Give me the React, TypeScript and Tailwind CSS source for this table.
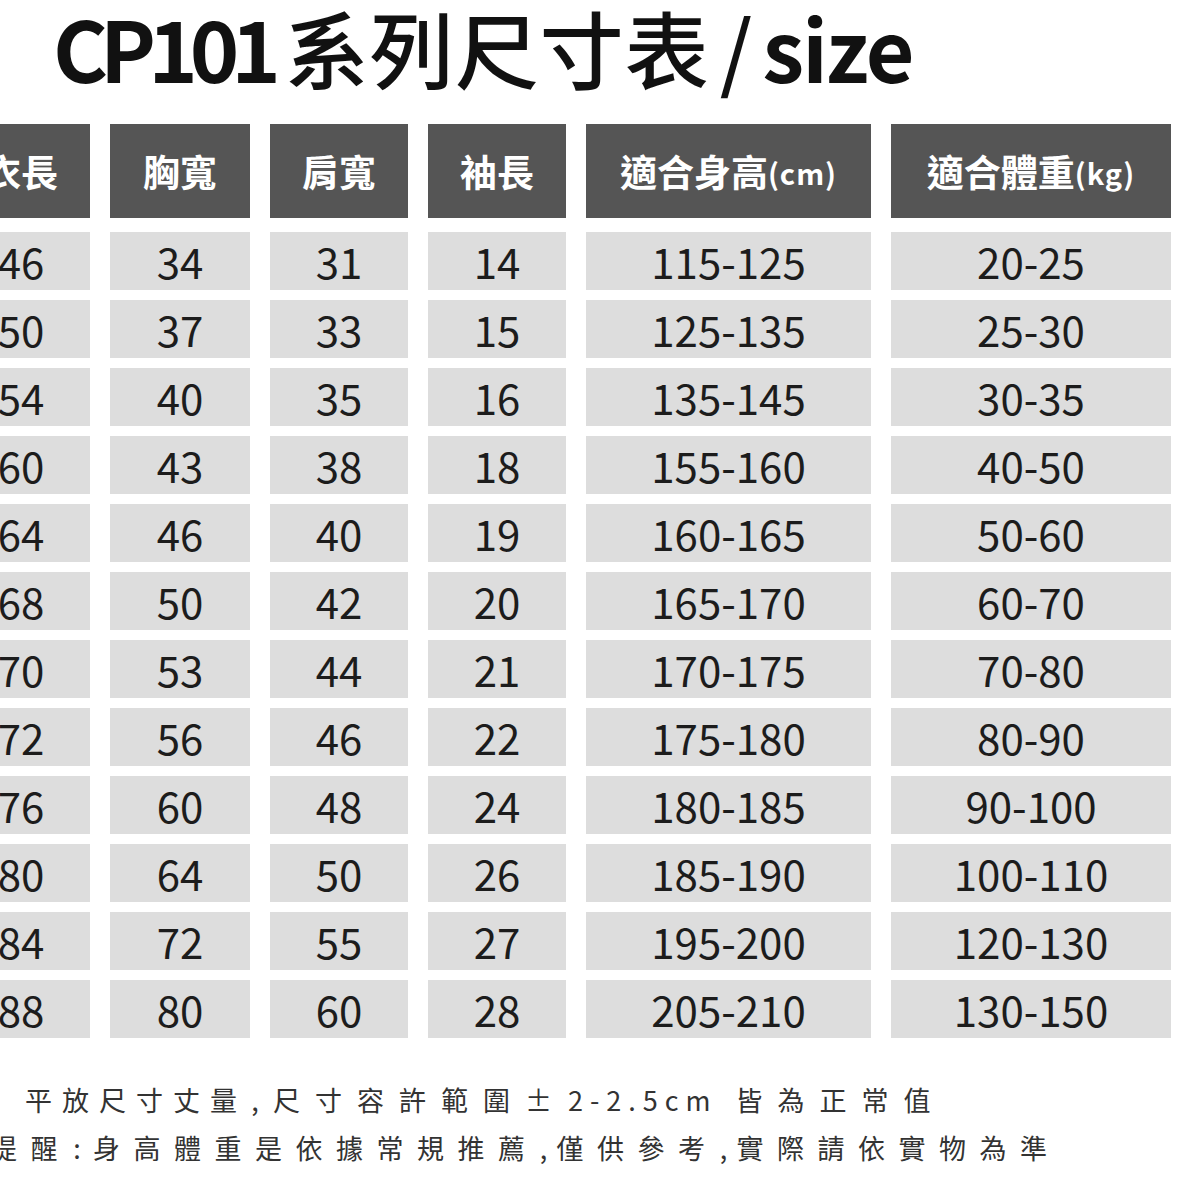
import React from "react"

const font = { fontFamily: '"Noto Sans CJK TC", "Noto Sans", sans-serif' }

const headers: { label: string; unit?: string }[] = [
  { label: "衣長" },
  { label: "胸寬" },
  { label: "肩寬" },
  { label: "袖長" },
  { label: "適合身高", unit: "(cm)" },
  { label: "適合體重", unit: "(kg)" },
]

const rows: string[][] = [
  ["46", "34", "31", "14", "115-125", "20-25"],
  ["50", "37", "33", "15", "125-135", "25-30"],
  ["54", "40", "35", "16", "135-145", "30-35"],
  ["60", "43", "38", "18", "155-160", "40-50"],
  ["64", "46", "40", "19", "160-165", "50-60"],
  ["68", "50", "42", "20", "165-170", "60-70"],
  ["70", "53", "44", "21", "170-175", "70-80"],
  ["72", "56", "46", "22", "175-180", "80-90"],
  ["76", "60", "48", "24", "180-185", "90-100"],
  ["80", "64", "50", "26", "185-190", "100-110"],
  ["84", "72", "55", "27", "195-200", "120-130"],
  ["88", "80", "60", "28", "205-210", "130-150"],
]

// first column runs off the left edge, like the cropped chart
const cols = "grid grid-cols-[138px_140px_138px_138px_285px_280px] gap-x-[20px] ml-[-48px]"

// narrow centred slot for punctuation
function P({ c, w }: { c: string; w: string }) {
  return <span className={`inline-block text-center tracking-normal ${w}`}>{c}</span>
}

export default function App() {
  return (
    <div className="w-[1200px] h-[1200px] bg-white overflow-hidden" style={font}>
      <h1 className="pt-[5px] pl-[53px] text-[84px] leading-none text-[#111] whitespace-nowrap">
        <span className="font-bold tracking-[-8px]">CP101</span>
        <span className="font-medium tracking-[1px] ml-[12px]">系列尺寸表</span>
        <span className="font-medium ml-[10px] mr-[10px]">/</span>
        <span className="font-bold tracking-[-2px]">size</span>
      </h1>

      <div className={`${cols} mt-[35px]`}>
        {headers.map((h) => (
          <div
            key={h.label}
            className="h-[94px] bg-[#555555] flex items-center justify-center text-white font-bold"
          >
            <span className="text-[37px] leading-none">{h.label}</span>
            {h.unit && <span className="text-[29px] leading-none tracking-[1px] mt-[3px]">{h.unit}</span>}
          </div>
        ))}
      </div>

      <div className={`${cols} gap-y-[10px] mt-[14px]`}>
        {rows.flatMap((r, i) =>
          r.map((v, j) => (
            <div
              key={`${i}-${j}`}
              className="h-[58px] bg-[#dddddd] flex items-center justify-center text-[42px] leading-none text-[#1c1c1c]"
            >
              {v}
            </div>
          ))
        )}
      </div>

      <div className="mt-[38px] text-[27px] leading-[48px] text-[#333] whitespace-nowrap">
        <p className="pl-[25px]">
          <span className="tracking-[10px]">平放尺寸丈量</span>
          <P c="," w="w-[16px] mr-[10px]" />
          <span className="tracking-[15px]">尺寸容許範圍</span>
          <span className="tracking-[12px]">±</span>
          <span className="tracking-[7px] ml-[4px] mr-[18px]">2-2.5cm</span>
          <span className="tracking-[15px]">皆為正常值</span>
        </p>
        <p className="ml-[-10px] tracking-[13.5px]">
          提醒<P c=":" w="w-[12px] mr-[10px]" />身高體重是依據常規推薦<P c="," w="w-[10px] mr-[8px]" />
          僅供參考<P c="," w="w-[10px] mr-[8px]" />實際請依實物為準
        </p>
      </div>
    </div>
  )
}
